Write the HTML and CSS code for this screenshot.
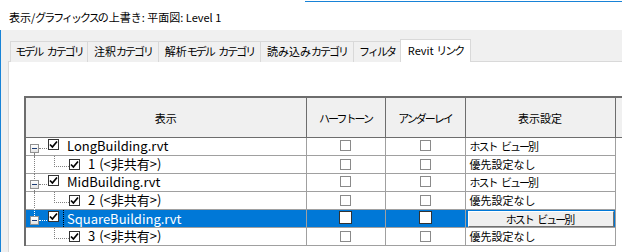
FILE: index.html
```html
<!DOCTYPE html>
<html lang="ja">
<head>
    <meta charset="UTF-8">
    <title>表示/グラフィックスの上書き</title>
    <link rel="stylesheet" href="styles.css">
</head>
<body>
    <div class="titlebar">表示/<span class="k">グラフィックス</span>の上書き: 平面図: Level 1</div>

    <div class="dialog">
        <div class="tabs">
            <div class="tab w1"><span class="k">モデル カテゴリ</span></div>
            <div class="tab w2">注釈<span class="k">カテゴリ</span></div>
            <div class="tab w3">解析<span class="k">モデル カテゴリ</span></div>
            <div class="tab w4">読み込み<span class="k">カテゴリ</span></div>
            <div class="tab w5"><span class="k">フィルタ</span></div>
            <div class="tab w6 active">Revit <span class="k">リンク</span></div>
        </div>

        <div class="panel">
            <table class="grid">
                <colgroup>
                    <col class="col-name">
                    <col class="col-half">
                    <col class="col-under">
                    <col class="col-disp">
                    <col class="col-more">
                </colgroup>
                <thead>
                    <tr>
                        <th>表示</th>
                        <th><span class="k">ハーフトーン</span></th>
                        <th><span class="k">アンダーレイ</span></th>
                        <th>表示設定</th>
                        <th></th>
                    </tr>
                </thead>
                <tbody>
                    <tr class="parent first">
                        <td class="tree"><div class="node"><span class="toggle"></span><span class="check on"><svg width="9" height="9" viewBox="0 0 9 9"><path d="M1 4.5 L3.4 7 L8 1.5" /></svg></span><span class="label">LongBuilding.rvt</span></div></td>
                        <td class="c"><span class="check"></span></td>
                        <td class="c"><span class="check"></span></td>
                        <td class="setting"><span class="k">ホスト ビュー</span>別</td>
                        <td class="more"></td>
                    </tr>
                    <tr class="child">
                        <td class="tree"><div class="node"><span class="check on"><svg width="9" height="9" viewBox="0 0 9 9"><path d="M1 4.5 L3.4 7 L8 1.5" /></svg></span><span class="label">1 (&lt;非共有&gt;)</span></div></td>
                        <td class="c"><span class="check"></span></td>
                        <td class="c"><span class="check"></span></td>
                        <td class="setting">優先設定なし</td>
                        <td class="more"></td>
                    </tr>
                    <tr class="parent">
                        <td class="tree"><div class="node"><span class="toggle"></span><span class="check on"><svg width="9" height="9" viewBox="0 0 9 9"><path d="M1 4.5 L3.4 7 L8 1.5" /></svg></span><span class="label">MidBuilding.rvt</span></div></td>
                        <td class="c"><span class="check"></span></td>
                        <td class="c"><span class="check"></span></td>
                        <td class="setting"><span class="k">ホスト ビュー</span>別</td>
                        <td class="more"></td>
                    </tr>
                    <tr class="child">
                        <td class="tree"><div class="node"><span class="check on"><svg width="9" height="9" viewBox="0 0 9 9"><path d="M1 4.5 L3.4 7 L8 1.5" /></svg></span><span class="label">2 (&lt;非共有&gt;)</span></div></td>
                        <td class="c"><span class="check"></span></td>
                        <td class="c"><span class="check"></span></td>
                        <td class="setting">優先設定なし</td>
                        <td class="more"></td>
                    </tr>
                    <tr class="parent last selected">
                        <td class="tree"><div class="node"><span class="toggle"></span><span class="check on"><svg width="9" height="9" viewBox="0 0 9 9"><path d="M1 4.5 L3.4 7 L8 1.5" /></svg></span><span class="label focus">SquareBuilding.rvt</span></div></td>
                        <td class="c"><span class="check"></span></td>
                        <td class="c"><span class="check"></span></td>
                        <td class="setting"><div class="btn"><span class="k">ホスト ビュー</span>別</div></td>
                        <td class="more"></td>
                    </tr>
                    <tr class="child end">
                        <td class="tree"><div class="node"><span class="check on"><svg width="9" height="9" viewBox="0 0 9 9"><path d="M1 4.5 L3.4 7 L8 1.5" /></svg></span><span class="label">3 (&lt;非共有&gt;)</span></div></td>
                        <td class="c"><span class="check"></span></td>
                        <td class="c"><span class="check"></span></td>
                        <td class="setting">優先設定なし</td>
                        <td class="more"></td>
                    </tr>
                </tbody>
            </table>
        </div>
    </div>
</body>
</html>
```

FILE: styles.css
```css
* {
    margin: 0;
    padding: 0;
    box-sizing: border-box;
}

html, body {
    width: 622px;
    height: 252px;
    overflow: hidden;
}

body {
    font-family: 'Noto Sans CJK JP', 'Noto Sans', sans-serif;
    font-size: 12px;
    color: #000;
    background-color: #fff;
    display: flex;
    flex-direction: column;
}

/* katakana runs are set narrow, like Meiryo UI */
.k {
    letter-spacing: -2px;
    word-spacing: 4px;
}

.titlebar {
    height: 30px;
    padding: 8px 0 0 9px;
    font-size: 11px;
    line-height: 16px;
    background-color: #fff;
    border-top: 1px solid transparent;
    background-image: linear-gradient(90deg, transparent 305px, #1883d7 305px);
    background-size: 100% 1px;
    background-repeat: no-repeat;
}

.dialog {
    flex: 1;
    display: flex;
    flex-direction: column;
    background-color: #f0f0f0;
    border-left: 1px solid #1883d7;
    padding: 9px 0 0 7px;
}

/* tabs */
.tabs {
    display: flex;
    align-items: flex-end;
    padding-left: 2px;
    height: 23px;
    position: relative;
    z-index: 1;
    font-size: 11px;
}

.tab {
    height: 21px;
    margin-right: -1px;
    border: 1px solid #d9d9d9;
    border-bottom: none;
    background-color: #f0f0f0;
    text-align: center;
    line-height: 19px;
    white-space: nowrap;
}

.tab.w1 { width: 78px; }
.tab.w2 { width: 72px; }
.tab.w3 { width: 103px; }
.tab.w4 { width: 94px; }
.tab.w5 { width: 48px; }
.tab.w6 { width: 71px; }

.tab.active {
    height: 23px;
    background-color: #fff;
    line-height: 21px;
}

.panel {
    flex: 1;
    background-color: #fff;
    border-top: 1px solid #d9d9d9;
    border-left: 1px solid #d9d9d9;
    margin-top: -1px;
    padding: 34px 0 0 15px;
    overflow: hidden;
}

/* grid */
.grid {
    border-collapse: collapse;
    table-layout: fixed;
    width: 640px;
    border-left: 2px solid #6d6d6d;
    border-top: 2px solid #6d6d6d;
}

.col-name { width: 281px; }
.col-half { width: 79px; }
.col-under { width: 80px; }
.col-disp { width: 150px; }
.col-more { width: 50px; }

.grid th {
    height: 40px;
    background-color: #f0f0f0;
    border-right: 1px solid #6d6d6d;
    border-bottom: 1px solid #6d6d6d;
    font-size: 11px;
    font-weight: normal;
    text-align: center;
    padding-top: 1px;
}

.grid td {
    height: 18px;
    border-right: 1px solid #a0a0a0;
    border-bottom: 1px solid #a0a0a0;
    padding: 0;
    line-height: 16px;
    vertical-align: middle;
    white-space: nowrap;
}

.grid td.more {
    border-bottom: none;
    border-right: none;
}

.grid td.c {
    text-align: center;
}

.grid td.setting {
    padding-left: 4px;
    font-size: 11px;
}

.check {
    display: inline-block;
    width: 11px;
    height: 11px;
    border: 1px solid #8a8a8a;
    background-color: #fff;
    vertical-align: middle;
    position: relative;
    top: -1px;
}

.check svg {
    display: block;
}

.check svg path {
    fill: none;
    stroke: #000;
    stroke-width: 1.7;
}

.tree .check {
    border-color: #333;
    top: 0;
}

/* tree */
.tree {
    position: relative;
}

.node {
    display: flex;
    align-items: center;
    height: 17px;
}

.parent .node {
    padding-left: 4px;
}

.child .node {
    padding-left: 43px;
}

.toggle {
    width: 9px;
    height: 9px;
    margin-top: 5px;
    margin-right: 9px;
    border: 1px solid #919191;
    background: linear-gradient(#fff, #e4e4e4);
    position: relative;
}

.toggle::after {
    content: '';
    position: absolute;
    left: 1px;
    top: 3px;
    width: 5px;
    height: 1px;
    background-color: #1c3c74;
}

.parent .check {
    margin-top: -3px;
}

.label {
    margin-left: 8px;
    font-size: 13px;
}

.child .label {
    margin-left: 8px;
    word-spacing: 1px;
}

/* dotted connectors */
.tree::before,
.tree::after {
    content: '';
    position: absolute;
}

.parent .tree::after {
    left: 13px;
    top: 10px;
    width: 8px;
    border-top: 1px dotted #808080;
}

.child .tree::after {
    left: 28px;
    top: 0;
    width: 14px;
    height: 10px;
    border-left: 1px dotted #808080;
    border-bottom: 1px dotted #808080;
}

.child .tree::before {
    left: 8px;
    top: -1px;
    height: 19px;
    border-left: 1px dotted #808080;
}

.child.end .tree::before {
    display: none;
}

.parent .tree::before {
    left: 8px;
    top: 15px;
    height: 4px;
    border-left: 1px dotted #808080;
}

.parent:not(.first) .tree::before {
    top: -1px;
    height: 20px;
}

.parent.last .tree::before {
    height: 7px;
}

/* selected row */
.selected td:not(.more) {
    background-color: #0078d7;
    color: #fff;
}

.selected .tree::before,
.selected .tree::after {
    border-color: #fff;
}

.selected td.c .check {
    width: 13px;
    height: 13px;
    border: 1px solid #333;
}

.selected .label.focus {
    border-left: 1px dotted #000;
    margin-left: 4px;
    padding-left: 3px;
    line-height: 17px;
}

.selected td.setting {
    padding: 1px 1px 0 2px;
}

.btn {
    height: 16px;
    background-color: #efefef;
    color: #000;
    border: 1px solid #fff;
    border-right-color: #707070;
    border-bottom-color: #707070;
    text-align: center;
    line-height: 14px;
}
```
